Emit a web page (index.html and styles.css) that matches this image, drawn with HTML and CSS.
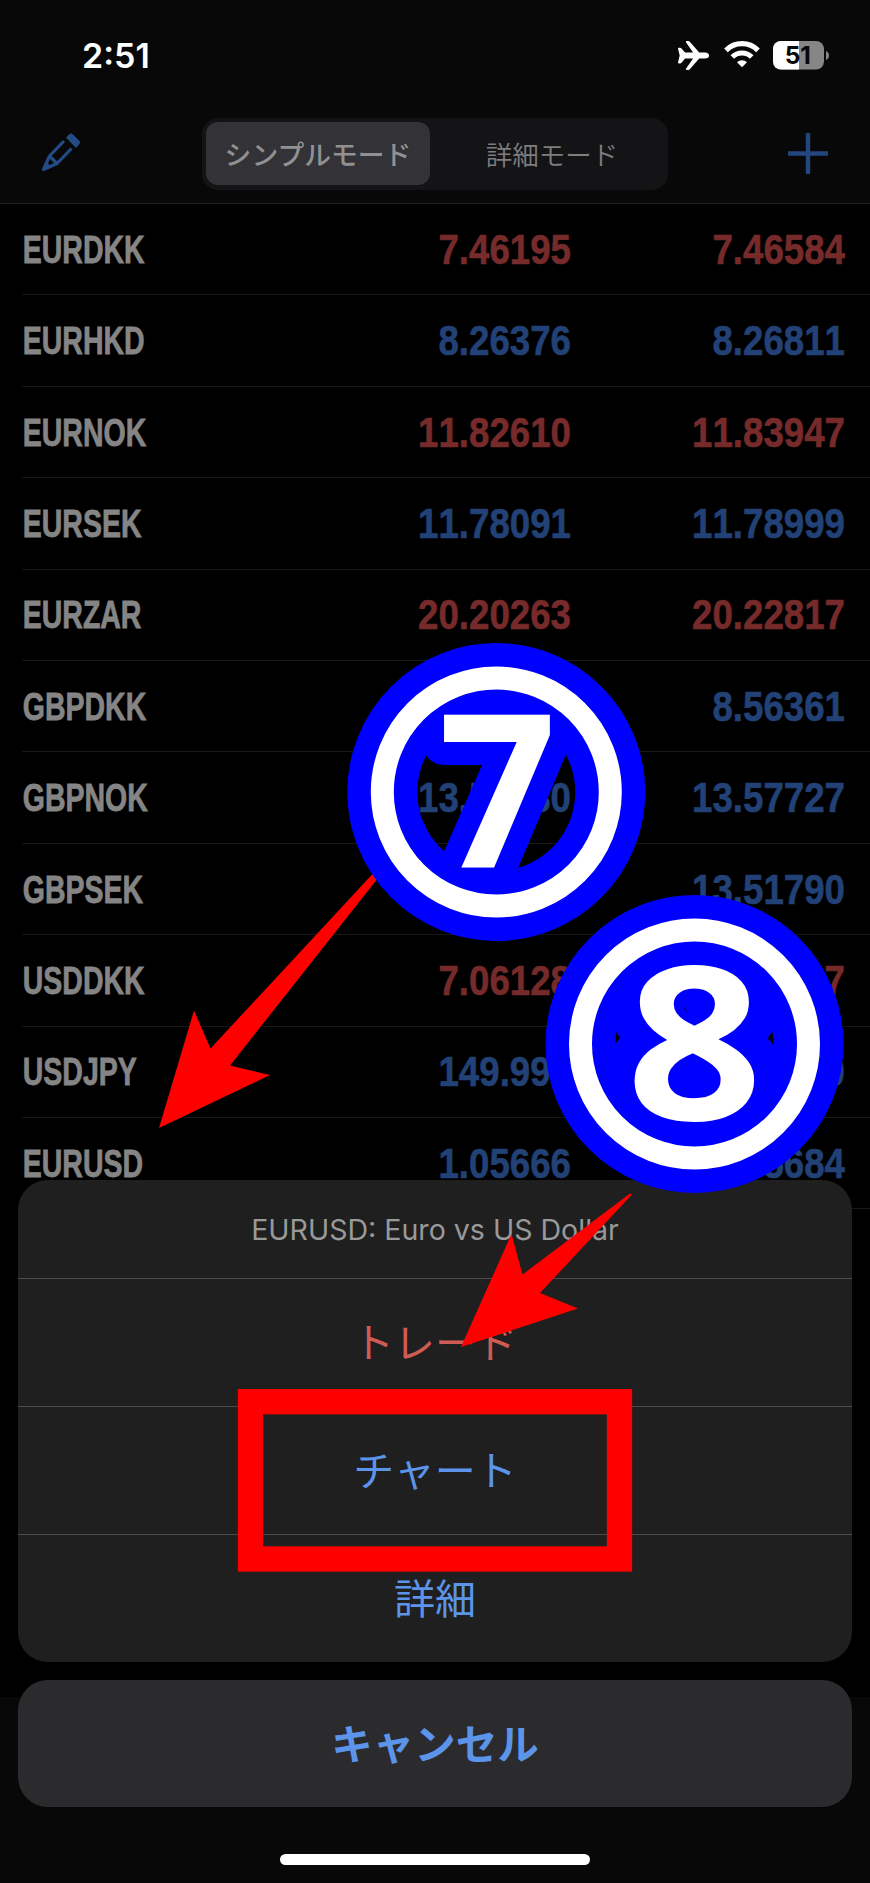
FILE: index.html
```html
<!DOCTYPE html>
<html lang="ja">
<head>
<meta charset="utf-8">
<title>Quotes</title>
<link rel="stylesheet" href="styles.css">
</head>
<body>
<div class="screen">
  <header class="top">
    <div class="status">
      <span class="time">2:51</span>
      <svg class="status-icons" width="156" height="34" viewBox="0 0 156 34">
        <path fill="#fff" d="M5 10.500q0-.8.8-.8h1.300q.8 0 1.400.7l3.600 4h8L13.100 4.400Q12.300 3 13.700 3h1.600q.9 0 1.500.8L26.200 14.400H32c2.600 0 4.100 1.500 4.100 3.100S34.600 20.600 32 20.600h-5.800L16.800 31.200q-.6.800-1.500.8h-1.600q-1.400 0-.6-1.400L20.100 20.600h-8l-3.600 4.100q-.6.700-1.400.7H5.800q-.8 0-.8-.8l1.700-7Z"/>
        <g fill="none" stroke="#fff">
          <path stroke-width="5.200" d="M53 12.400a22.500 22.500 0 0 1 32 0"/>
          <path stroke-width="5.200" d="M59.300 19a13.800 13.800 0 0 1 19.400 0"/>
        </g>
        <path fill="#fff" d="M69 29.300l-5-5a7.400 7.400 0 0 1 10 0Z"/>
        <clipPath id="cell"><rect x="100" y="3" width="51" height="28.500" rx="8"/></clipPath>
        <g clip-path="url(#cell)"><rect x="100" y="3" width="51" height="29" fill="#868686"/><rect x="100" y="3" width="26" height="29" fill="#fff"/></g>
        <path fill="#868686" d="M153 13q3 1.500 3 4.500t-3 4.500Z"/>
        <text class="charge" x="124.800" y="26.400">51</text>
      </svg>
    </div>
    <nav class="toolbar">
      <svg class="pencil" width="42" height="42" viewBox="0 0 42 42">
        <path fill="none" stroke="#234b86" stroke-width="3.200" stroke-linejoin="round" d="M24 9L9.500 24 3.500 37.500 17 31.500 31.500 16.500M9.500 24L17 31.500"/>
        <path fill="#234b86" d="M26 5.500l3-3q2-2 4 0l6 6q2 2 0 4l-3 3.500ZM3 38.500L6.500 30 11.500 35Z"/>
      </svg>
      <div class="segments">
        <span class="segment on">シンプルモード</span>
        <span class="segment">詳細モード</span>
      </div>
      <svg width="40" height="42" viewBox="0 0 40 42"><path stroke="#23467d" stroke-width="4.400" d="M0 20.500h40M20 0v41"/></svg>
    </nav>
  </header>
  <main class="list">
    <div class="row red"><span class="pair">EURDKK</span><span class="price">7.46195</span><span class="price">7.46584</span></div>
    <div class="row"><span class="pair">EURHKD</span><span class="price">8.26376</span><span class="price">8.26811</span></div>
    <div class="row red"><span class="pair">EURNOK</span><span class="price">11.82610</span><span class="price">11.83947</span></div>
    <div class="row"><span class="pair">EURSEK</span><span class="price">11.78091</span><span class="price">11.78999</span></div>
    <div class="row red"><span class="pair">EURZAR</span><span class="price">20.20263</span><span class="price">20.22817</span></div>
    <div class="row"><span class="pair">GBPDKK</span><span class="price">8.55830</span><span class="price">8.56361</span></div>
    <div class="row"><span class="pair">GBPNOK</span><span class="price">13.55630</span><span class="price">13.57727</span></div>
    <div class="row"><span class="pair">GBPSEK</span><span class="price">13.50460</span><span class="price">13.51790</span></div>
    <div class="row red"><span class="pair">USDDKK</span><span class="price">7.06128</span><span class="price">7.06487</span></div>
    <div class="row"><span class="pair">USDJPY</span><span class="price">149.990</span><span class="price">150.010</span></div>
    <div class="row"><span class="pair">EURUSD</span><span class="price">1.05666</span><span class="price">1.05684</span></div>
  </main>
  <footer class="tabs"></footer>

  <section class="sheet">
    <div class="menu">
      <div class="title">EURUSD: Euro vs US Dollar</div>
      <div class="action danger">トレード</div>
      <div class="action">チャート</div>
      <div class="action">詳細</div>
    </div>
    <div class="cancel">キャンセル</div>
    <div class="home"></div>
  </section>

  <svg class="marks" width="870" height="1883" viewBox="0 0 870 1883">
    <g fill="#f00">
      <path d="M159 1128L194 1010.500 210.500 1048.500 379 867 382 873 230 1065.500 270 1075Z"/>
      <path d="M461 1347L511.500 1234 522.500 1274.500 630 1193.500 632 1194.500 540 1293 578 1308.500Z"/>
    </g>
    <rect x="250.500" y="1401.700" width="369" height="157.300" fill="none" stroke="#f00" stroke-width="25.300"/>
    <g class="badge">
      <circle class="halo" cx="496.300" cy="792" r="114"/>
      <text class="digit" transform="translate(497.500 868) scale(.97 1)">7</text>
      <circle class="ring" cx="496.300" cy="792" r="114"/>
    </g>
    <g class="badge">
      <circle class="halo" cx="694.500" cy="1044" r="114"/>
      <text class="digit wide" transform="translate(694.500 1119.500) scale(1.12 1)">8</text>
      <circle class="ring" cx="694.500" cy="1044" r="114"/>
    </g>
  </svg>
</div>
</body>
</html>
```
FILE: styles.css
```css
* { box-sizing: border-box; }
body { margin: 0; background: #000; }
.screen { position: relative; width: 870px; height: 1883px; overflow: hidden; display: flex; flex-direction: column; background: #000; font-family: Inter, "Noto Sans CJK JP", sans-serif; }

.top { height: 204px; flex: none; background: #080808; border-bottom: 1px solid #222; }
.status { display: flex; justify-content: space-between; align-items: flex-start; height: 118px; padding: 38px 41px 0 82px; }
.time { color: #fff; font-size: 34px; line-height: 36px; font-weight: 600; }
.charge { font: 700 24.500px Inter, sans-serif; text-anchor: middle; fill: #080808; }
.toolbar { display: flex; align-items: center; height: 72px; padding: 0 42px 0 40px; }
.pencil { position: relative; top: -1px; }
.segments { display: flex; width: 466px; height: 72px; padding: 4px; border-radius: 16px; background: #141416; margin: 0 auto 0 120px; }
.segment { width: 224px; height: 63px; padding-bottom: 1px; display: flex; align-items: center; justify-content: center; border-radius: 12px; color: #7e7e7f; font: 350 26.500px "Noto Sans CJK JP", sans-serif; }
.segment + .segment { margin-left: 10px; }
.segment.on { background: #333236; color: #919193; font-weight: 500; font-size: 26.800px; }

.list { height: 1493px; flex: none; }
.row { position: relative; display: grid; grid-template-columns: 200px 1fr 274px; align-items: center; height: 91.420px; padding: 0 25px 0 22px; font-family: "Liberation Sans", sans-serif; font-weight: 700; font-kerning: none; color: #224277; }
.row::after { content: ""; position: absolute; left: 22px; right: 0; bottom: 0; height: 1px; background: #171717; }
.row.red { color: #762b2a; }
.pair { color: #858585; font-size: 38.500px; padding-left: 1px; transform: scaleX(.74); transform-origin: left; -webkit-text-stroke: .8px #858585; }
.price { font-size: 42px; text-align: right; transform: scaleX(.873); transform-origin: right; -webkit-text-stroke: .6px; }
.tabs { flex: 1; background: #080808; }

.sheet { position: absolute; left: 18px; top: 1180px; width: 834px; text-align: center; color: #5c94ea; }
.menu { height: 482px; border-radius: 30px; background: #1f1f1f; overflow: hidden; }
.title { height: 98px; line-height: 100px; font-size: 28.550px; color: #999; }
.action { height: 128px; line-height: 122px; border-top: 1px solid #4b4b4b; font-family: "Noto Sans CJK JP", sans-serif; font-size: 41px; font-weight: 400; }
.action.danger { color: #cf5b55; }
.cancel { margin-top: 18px; height: 127px; line-height: 124px; border-radius: 30px; background: #2b2b2d; font-family: "Noto Sans CJK JP", sans-serif; font-size: 41.500px; font-weight: 700; }
.home { width: 310px; height: 11px; margin: 47px auto 0; border-radius: 6px; background: #fff; }

.marks { position: absolute; left: 0; top: 0; }
.halo { fill: none; stroke: #00f; stroke-width: 70px; }
.ring { fill: none; stroke: #fff; stroke-width: 23px; }
.digit { font: 700 213px "Open Sans", sans-serif; text-anchor: middle; fill: #fff; stroke: #00f; stroke-width: 46px; stroke-linejoin: round; paint-order: stroke; }
.digit.wide { stroke-width: 56px; }
```
